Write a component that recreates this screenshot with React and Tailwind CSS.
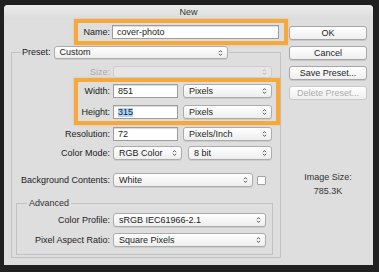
const Arrows = ({ color = '#444' }) => (
  <svg width="5" height="8" viewBox="0 0 5 8">
    <path d="M1 3.2 L2.5 1.6 L4 3.2 M1 4.8 L2.5 6.4 L4 4.8" stroke={color} fill="none" strokeWidth="0.9" />
  </svg>
)

const Select = ({ className, children, disabled }) => (
  <div
    className={`flex items-center justify-between rounded-[3px] border pl-[5px] pr-[4px] ${
      disabled
        ? 'border-[#cdcdcd] bg-[#e6e6e6]'
        : 'border-[#ababab] bg-linear-to-b from-white to-[#eeeeee] shadow-[0_1px_0_rgba(0,0,0,0.08)]'
    } ${className}`}
  >
    <span>{children}</span>
    <Arrows color={disabled ? '#b0b0b0' : '#444'} />
  </div>
)

const Field = ({ className, children }) => (
  <div className={`flex items-center h-[14px] border border-[#9d9d9d] bg-white pl-[4px] shadow-[inset_0_1px_1px_rgba(0,0,0,0.15)] ${className}`}>
    {children}
  </div>
)

const Button = ({ children, disabled }) => (
  <div
    className={`flex items-center justify-center h-[14px] rounded-[3px] border bg-linear-to-b from-white to-[#efefef] ${
      disabled ? 'border-[#c8c8c8] text-[#ababab]' : 'border-[#a6a6a6] shadow-[0_1px_0_rgba(0,0,0,0.1)]'
    }`}
  >
    {children}
  </div>
)

const App = () => {
  return (
    <div className="w-[379px] h-[272px] bg-[#202020] pt-[5px] pl-[4px] font-['Liberation_Sans',Arial,sans-serif] text-[9px] leading-none text-[#1c1c1c]">
      <div className="w-[369px] h-[260px] bg-[#dedede] rounded-t-[4px] flex flex-col overflow-hidden">
        <div className="h-[14px] flex items-center justify-center bg-linear-to-b from-[#ebebeb] to-[#dcdcdc] text-[#333]">
          New
        </div>

        <div className="flex">
          {/* left side */}
          <div className="w-[284px] flex flex-col">
            <div className="ml-[70px] w-[214px] h-[26px] border-[4px] border-[#f5a93d] flex items-center shadow-[0_0_2px_rgba(245,169,61,0.6)]">
              <span className="w-[32px] text-right">Name:</span>
              <Field className="ml-[2px] w-[167px]">cover-photo</Field>
            </div>

            <fieldset className="ml-[7px] w-[269px] mt-[1px] border border-[#c2c2c2]">
              <legend className="ml-[9px] px-[1px]">
                <div className="flex items-center">
                  <span>Preset:</span>
                  <Select className="ml-[3px] w-[174px] h-[13px]">Custom</Select>
                </div>
              </legend>

              <div className="flex items-center h-[12px] mt-[7px]">
                <span className="w-[98px] text-right text-[#a9a9a9]">Size:</span>
                <Select disabled className="ml-[3px] w-[159px] h-[12px]"></Select>
              </div>

              <div className="ml-[62px] w-[206px] h-[47px] border-[4px] border-[#f5a93d] flex flex-col shadow-[0_0_2px_rgba(245,169,61,0.6)]">
                <div className="flex items-center mt-[2px]">
                  <span className="w-[32px] text-right">Width:</span>
                  <Field className="ml-[3px] w-[65px]">851</Field>
                  <Select className="ml-[5px] w-[89px] h-[14px]">Pixels</Select>
                </div>
                <div className="flex items-center mt-[7px]">
                  <span className="w-[32px] text-right">Height:</span>
                  <Field className="ml-[3px] w-[65px]">
                    <span className="bg-[#b3d3fd]">315</span>
                  </Field>
                  <Select className="ml-[5px] w-[89px] h-[14px]">Pixels</Select>
                </div>
              </div>

              <div className="flex items-center mt-[2px]">
                <span className="w-[98px] text-right">Resolution:</span>
                <Field className="ml-[3px] w-[65px]">72</Field>
                <Select className="ml-[5px] w-[89px] h-[14px]">Pixels/Inch</Select>
              </div>

              <div className="flex items-center mt-[5px]">
                <span className="w-[98px] text-right">Color Mode:</span>
                <Select className="ml-[3px] w-[69px] h-[14px]">RGB Color</Select>
                <Select className="ml-[6px] w-[84px] h-[14px]">8 bit</Select>
              </div>

              <div className="flex items-center mt-[13px]">
                <span className="w-[98px] text-right">Background Contents:</span>
                <Select className="ml-[3px] w-[140px] h-[14px]">White</Select>
                <div className="ml-[4px] w-[9px] h-[9px] border border-[#a3a3a3] bg-white rounded-[1px]"></div>
              </div>

              <fieldset className="mt-[11px] ml-[4px] mb-[2px] w-[257px] border border-[#c2c2c2] pb-[7px]">
                <legend className="ml-[10px] px-[2px] leading-[11px] text-[#333]">Advanced</legend>
                <div className="flex items-center mt-[4px]">
                  <span className="w-[93px] text-right">Color Profile:</span>
                  <Select className="ml-[3px] w-[153px] h-[14px]">sRGB IEC61966-2.1</Select>
                </div>
                <div className="flex items-center mt-[6px]">
                  <span className="w-[93px] text-right">Pixel Aspect Ratio:</span>
                  <Select className="ml-[3px] w-[153px] h-[14px]">Square Pixels</Select>
                </div>
              </fieldset>
            </fieldset>
          </div>

          {/* right side */}
          <div className="w-[80px] px-[1px] pt-[7px] flex flex-col">
            <div className="flex flex-col gap-[6px]">
              <Button>OK</Button>
              <Button>Cancel</Button>
              <Button>Save Preset...</Button>
              <Button disabled>Delete Preset...</Button>
            </div>
            <div className="mt-[72px] text-center leading-[11px] text-[#333]">Image Size:</div>
            <div className="mt-[3px] text-center leading-[11px] text-[#333]">785.3K</div>
          </div>
        </div>
      </div>
    </div>
  )
}

export default App
